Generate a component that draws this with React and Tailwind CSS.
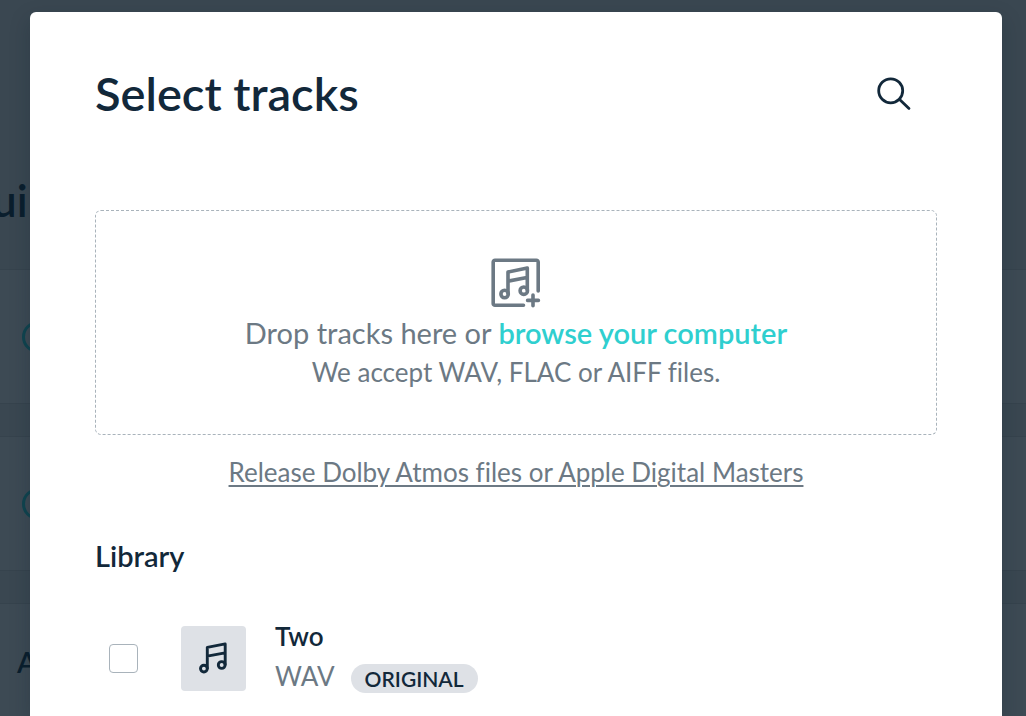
import React, { useState } from "react";

const tracks = [{ id: 1, title: "Two", format: "WAV", tag: "ORIGINAL" }];

const SearchIcon = () => (
  <svg width="36" height="36" viewBox="0 0 36 36" fill="none" stroke="currentColor" strokeWidth="2.8" strokeLinecap="round">
    <circle cx="14.7" cy="14.8" r="12" />
    <path d="M23.6 23.4 33 32.4" />
  </svg>
);

const NoteIcon = () => (
  <svg width="30" height="32" viewBox="0 0 30 32" fill="none" stroke="currentColor" strokeWidth="2.9" strokeLinecap="round" strokeLinejoin="round">
    <circle cx="4.9" cy="26.6" r="3.4" />
    <circle cx="22.7" cy="23" r="3.4" />
    <path d="M8.3 26.2V5.3L26.2 1.9V22.6M8.3 14.2l17.7-3.4" />
  </svg>
);

const AddTrackIcon = () => (
  <svg width="50" height="50" viewBox="0 0 50 50" fill="none" stroke="currentColor" strokeWidth="3.6" strokeLinecap="round" strokeLinejoin="round">
    <path d="M32.5 47.2H4a1.8 1.8 0 0 1-1.8-1.8V4A1.8 1.8 0 0 1 4 2.2H45.4A1.8 1.8 0 0 1 47.2 4V33" />
    <circle cx="13.6" cy="36" r="3.7" />
    <circle cx="32.8" cy="32.7" r="3.7" />
    <path d="M17 35.5V14L36.3 10V32M17 23.2l19-3.8M42 37v10.8M36.6 42.4h10.8" />
  </svg>
);

const PageRow = ({ children }) => (
  <section className="h-[135px] border-y border-[#36434d] bg-[#3d4a54] pl-[22px] flex items-center">
    {children}
  </section>
);

const Ring = () => <span className="size-8 rounded-full border-3 border-[#10444f]" />;

const App = () => {
  const [selected, setSelected] = useState([]);

  const toggleTrack = (id) => {
    setSelected(selected.includes(id) ? selected.filter((item) => item !== id) : [...selected, id]);
  };

  return (
    <div className="relative h-screen overflow-hidden bg-[#3a4751] font-['Lato',sans-serif] text-[#12283a] [font-variant-ligatures:none]">
      {/* Page under the modal */}
      <div aria-hidden="true" className="flex flex-col gap-8 text-[#0a1e2d]">
        <div className="flex h-[237px] items-end pb-2">
          <p className="-ml-2 text-[44px] leading-[58px] font-semibold">ui</p>
        </div>
        <PageRow><Ring /></PageRow>
        <PageRow><Ring /></PageRow>
        <section className="h-[135px] border-y border-[#36434d] bg-[#3d4a54] pt-[38px] pl-[17px]">
          <p className="text-[29px] leading-10 font-semibold">A</p>
        </section>
      </div>

      <div className="absolute inset-0 pt-3 pr-6 pl-[30px]">
        <div role="dialog" aria-labelledby="modal-title" className="h-full rounded-t-md bg-white px-[65px] pt-12 shadow-[0_8px_20px_rgba(10,30,45,0.25)]">
          <header className="flex h-[68px] items-start justify-between">
            <h1 id="modal-title" className="text-[47px] leading-[66px] font-semibold">Select tracks</h1>
            <button type="button" aria-label="Search" className="mt-4 mr-[25px]">
              <SearchIcon />
            </button>
          </header>

          <div className="mt-[82px] flex h-[225px] flex-col items-center rounded-md border border-dashed border-[#a9b3bb] pt-[47px] text-[#6c7984]">
            <AddTrackIcon />
            <p className="mt-1 text-[29px] leading-[42px]">
              Drop tracks here or{" "}
              <button type="button" className="font-semibold text-[#2fcfcf]">browse your computer</button>
            </p>
            <p className="text-[26px] leading-9">We accept WAV, FLAC or AIFF files.</p>
          </div>

          <div className="mt-[19px] text-center text-[26px] leading-9 text-[#6c7984]">
            <a href="#formats" className="underline decoration-2 underline-offset-3">Release Dolby Atmos files or Apple Digital Masters</a>
          </div>

          <h2 className="mt-[46px] text-[29px] leading-10 font-semibold">Library</h2>

          <ul className="mt-[42px]">
            {tracks.map((track) => (
              <li key={track.id} className="flex items-center">
                <input
                  id={`track-${track.id}`}
                  type="checkbox"
                  checked={selected.includes(track.id)}
                  onChange={() => toggleTrack(track.id)}
                  className="ml-3.5 size-[29px] shrink-0 appearance-none rounded-sm border border-[#a9b3bb] bg-white checked:bg-[#2fcfcf]"
                />
                <div className="ml-[43px] flex size-[65px] shrink-0 items-center justify-center rounded-sm bg-[#dee1e6]">
                  <NoteIcon />
                </div>
                <div className="ml-[29px] pb-1">
                  <label htmlFor={`track-${track.id}`} className="block text-[26px] leading-9 font-semibold">{track.title}</label>
                  <div className="mt-1 flex items-center gap-4">
                    <span className="text-[26px] leading-9 text-[#6c7984]">{track.format}</span>
                    <span className="mt-1 rounded-full bg-[#dee1e6] px-3.5 text-[21px] leading-[29px] font-semibold">{track.tag}</span>
                  </div>
                </div>
              </li>
            ))}
          </ul>
        </div>
      </div>
    </div>
  );
};

export default App;
